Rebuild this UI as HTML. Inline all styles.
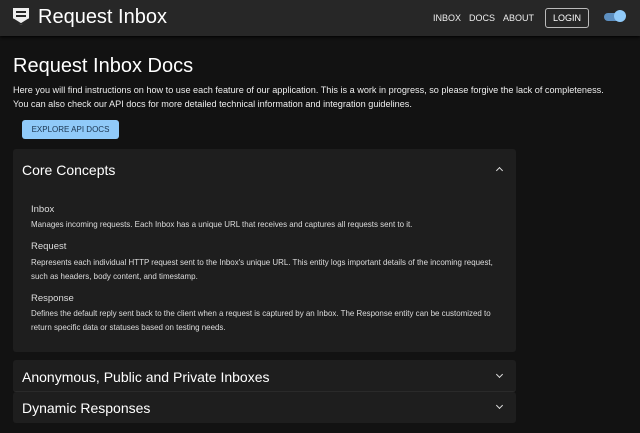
<!DOCTYPE html>
<html><head><style>
body{margin:0;width:640px;height:433px;background:#121212;font-family:"Liberation Sans",sans-serif;color:#fff;overflow:hidden;position:relative}
.hdr{position:absolute;left:0;top:0;width:640px;height:36px;background:#272727;box-shadow:0 1px 3px #000}
.abs{position:absolute;white-space:nowrap}
.nav{font-size:9px;top:13px;color:#eee}
.card{position:absolute;left:13px;width:503px;background:#1e1e1e;border-radius:3px}
.h{font-size:14px;position:absolute;left:9px}
.chev{position:absolute;right:14px;width:4px;height:4px;border-right:1.3px solid #ddd;border-bottom:1.3px solid #ddd}
.sub{position:absolute;left:31px;font-size:9.5px;color:#ddd}
.p{position:absolute;left:31px;font-size:7.95px;color:#ddd;line-height:13.5px;width:475px}
</style></head><body>
<div class="hdr"></div>
<svg class="abs" style="left:12px;top:7px" width="18" height="20" viewBox="0 0 18 20">
<path d="M1 1h16v11l-8 6-8-6z" fill="#eee"/>
<rect x="4" y="4" width="10" height="2" fill="#272727"/><rect x="4" y="8" width="10" height="2" fill="#272727"/>
<path d="M1 12l8 5 8-5" stroke="#272727" stroke-width="1.5" fill="none"/>
</svg>
<div class="abs" style="left:38px;top:6px;font-size:20px">Request Inbox</div>
<div class="abs nav" style="left:433px">INBOX</div>
<div class="abs nav" style="left:469px">DOCS</div>
<div class="abs nav" style="left:503px">ABOUT</div>
<div class="abs" style="left:545px;top:8px;width:42px;height:18px;border:1px solid #bbb;border-radius:3px;font-size:9px;text-align:center;line-height:18px">LOGIN</div>
<div class="abs" style="left:604px;top:13px;width:20px;height:8px;background:#5d8fc0;border-radius:4px"></div>
<div class="abs" style="left:614px;top:10px;width:12px;height:12px;background:#90caf9;border-radius:50%"></div>
<div class="abs" style="left:13px;top:55px;font-size:20px">Request Inbox Docs</div>
<div class="abs" style="left:13px;top:84px;font-size:9.15px;line-height:13.5px;color:#eee">Here you will find instructions on how to use each feature of our application. This is a work in progress, so please forgive the lack of completeness.<br>You can also check our API docs for more detailed technical information and integration guidelines.</div>
<div class="abs" style="left:22px;top:120px;width:97px;height:19px;background:#90caf9;border-radius:3px;color:#1a3550;font-size:8px;text-align:center;line-height:19px">EXPLORE API DOCS</div>
<div class="card" style="top:149px;height:203px">
<div class="h" style="top:13px">Core Concepts</div>
<div class="chev" style="top:19px;transform:rotate(-135deg)"></div>
</div>
<div class="sub" style="top:204px">Inbox</div>
<div class="p" style="top:218px">Manages incoming requests. Each Inbox has a unique URL that receives and captures all requests sent to it.</div>
<div class="sub" style="top:241px">Request</div>
<div class="p" style="top:256px">Represents each individual HTTP request sent to the Inbox's unique URL. This entity logs important details of the incoming request, such as headers, body content, and timestamp.</div>
<div class="sub" style="top:293px">Response</div>
<div class="p" style="top:307px">Defines the default reply sent back to the client when a request is captured by an Inbox. The Response entity can be customized to return specific data or statuses based on testing needs.</div>
<div class="card" style="top:360px;height:31px;border-bottom:1px solid #2a2a2a">
<div class="h" style="top:9px">Anonymous, Public and Private Inboxes</div>
<div class="chev" style="top:12px;transform:rotate(45deg)"></div>
</div>
<div class="card" style="top:392px;height:31px">
<div class="h" style="top:8px">Dynamic Responses</div>
<div class="chev" style="top:11px;transform:rotate(45deg)"></div>
</div>
</body></html>
